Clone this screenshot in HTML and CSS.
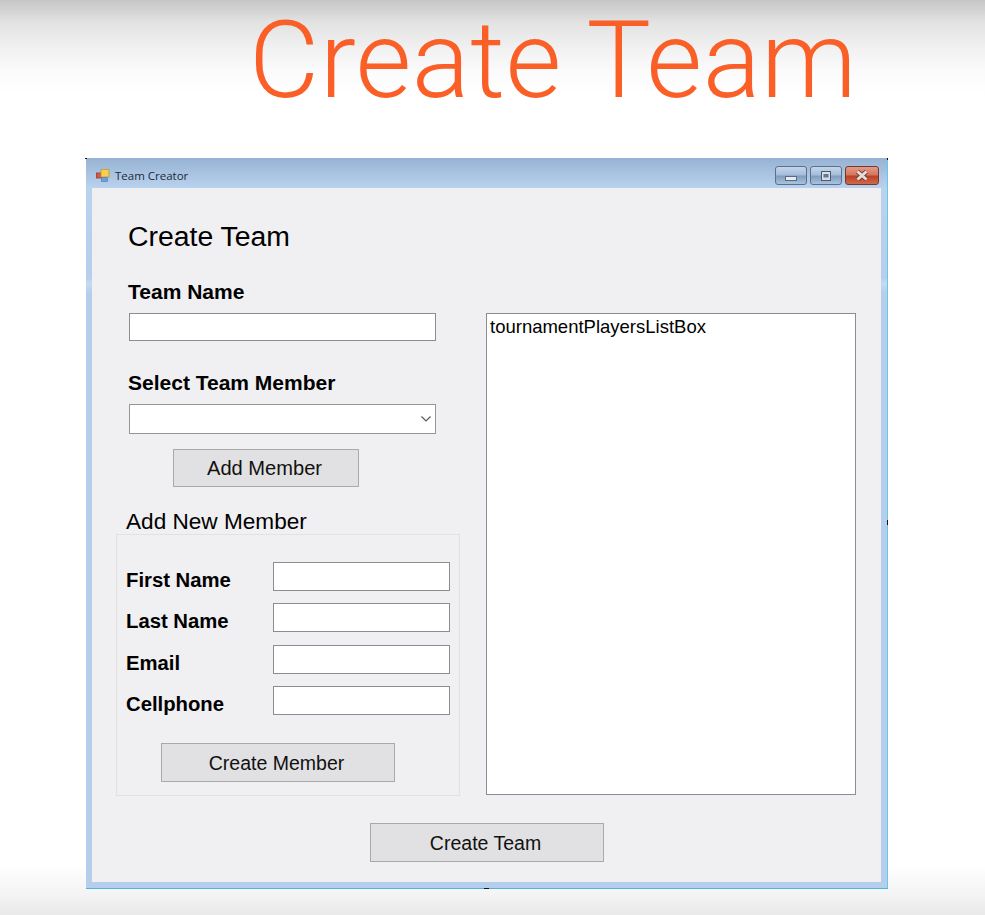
FILE: index.html
```html
<!DOCTYPE html>
<html lang="en">
<head>
    <meta charset="UTF-8">
    <title>Create Team</title>
    <link rel="stylesheet" href="styles.css">
</head>
<body>
    <h1 class="slide-title">Create Team</h1>
    <div class="window">
        <span class="mark mark-tl"></span>
        <span class="mark mark-tr"></span>
        <span class="mark mark-right"></span>
        <span class="mark mark-bottom"></span>
        <div class="titlebar">
            <svg class="app-icon" width="14" height="13" viewBox="0 0 14 13">
                <rect x="0.5" y="4" width="5" height="5" fill="#d9534a" stroke="#9b3a34" stroke-width="0.8"/>
                <rect x="5" y="0.5" width="8" height="7.5" fill="#f6cf4e" stroke="#c39a2a" stroke-width="0.8"/>
                <rect x="5.5" y="8.5" width="6" height="4" fill="#6d9fdc" stroke="#4a78b2" stroke-width="0.6"/>
            </svg>
            <span class="window-name">Team Creator</span>
            <div class="controls">
                <div class="ctl">
                    <svg class="min-glyph" width="12" height="5" viewBox="0 0 12 5"><rect x="0.5" y="0.5" width="11" height="4" fill="#e6ebf1" stroke="#5a6a80"/></svg>
                </div>
                <div class="ctl">
                    <svg width="12" height="10" viewBox="0 0 12 10"><rect x="1.5" y="0.5" width="9" height="9" fill="#d5dde8" stroke="#4a5a70"/><rect x="3.5" y="3" width="5" height="3.5" fill="#66788f"/></svg>
                </div>
                <div class="ctl ctl-close">
                    <svg width="14" height="11" viewBox="0 0 14 11"><path d="M2.5 1.5 L11.5 9.5 M11.5 1.5 L2.5 9.5" stroke="#7a3a30" stroke-width="4.6"/><path d="M2.5 1.5 L11.5 9.5 M11.5 1.5 L2.5 9.5" stroke="#e4dedb" stroke-width="3"/></svg>
                </div>
            </div>
        </div>
        <div class="client">
            <div class="columns">
                <div class="left">
                    <div class="form-head">
                        <h2 class="form-title">Create Team</h2>
                        <label class="field-label">Team Name</label>
                        <input class="text-box name-box" type="text">
                        <label class="field-label member-label">Select Team Member</label>
                        <div class="combo">
                            <svg width="10" height="6" viewBox="0 0 10 6"><path d="M0.5 0.5 L5 5 L9.5 0.5" fill="none" stroke="#5a5a5a" stroke-width="1.2"/></svg>
                        </div>
                        <button class="btn add-btn">Add Member</button>
                    </div>
                    <div class="group-title">Add New Member</div>
                    <div class="group">
                        <div class="row"><span class="row-label">First Name</span><input class="text-box row-box" type="text"></div>
                        <div class="row"><span class="row-label">Last Name</span><input class="text-box row-box" type="text"></div>
                        <div class="row"><span class="row-label">Email</span><input class="text-box row-box" type="text"></div>
                        <div class="row"><span class="row-label">Cellphone</span><input class="text-box row-box" type="text"></div>
                        <button class="btn create-member">Create Member</button>
                    </div>
                </div>
                <div class="list-box">tournamentPlayersListBox</div>
            </div>
            <button class="btn create-team">Create Team</button>
        </div>
    </div>
</body>
</html>
```

FILE: styles.css
```css
*{
    box-sizing: border-box;
}
body{
    margin: 0;
    height: 915px;
    overflow: hidden;
    font-family: 'Liberation Sans', Arial, sans-serif;
    color: #000;
    background: linear-gradient(#c6c6c6 0, #e2e2e2 22px, #f2f2f2 50px, #fbfbfb 72px, #fff 95px, #fff 865px, #f4f4f4 893px, #e9e9e9 915px);
}
.slide-title{
    margin: 0;
    height: 158px;
    padding-left: 249px;
    font-family: Roboto, sans-serif;
    font-weight: 300;
    font-size: 108px;
    line-height: 120px;
    letter-spacing: 0.5px;
    color: #fb5f28;
}
.window{
    position: relative;
    width: 802px;
    height: 731px;
    margin-left: 86px;
    display: flex;
    flex-direction: column;
    border-right: 1px solid #5fcbe6;
    border-bottom: 1px solid #4fb3dc;
    background: linear-gradient(#97b2d3 0, #b9d2ee 30px, #b5cfec 120px, #c6dbf1 125px, #b4ceeb 135px, #b4ceeb 100%);
}
.mark{
    position: absolute;
    background: #111;
}
.mark-tl{
    left: -1px;
    top: 0;
    width: 2px;
    height: 1px;
}
.mark-tr{
    right: -1px;
    top: 0;
    width: 1px;
    height: 2px;
}
.mark-right{
    right: -1px;
    top: 362px;
    width: 1px;
    height: 5px;
}
.mark-bottom{
    left: 398px;
    bottom: -1px;
    width: 5px;
    height: 1px;
}
.titlebar{
    height: 30px;
    flex-shrink: 0;
    display: flex;
    align-items: center;
    padding: 5px 8px 0 10px;
}
.app-icon{
    margin-right: 5px;
}
.window-name{
    font-family: 'Open Sans', sans-serif;
    font-size: 11.5px;
    color: #1c2a3a;
}
.controls{
    margin-left: auto;
    display: flex;
    gap: 3px;
}
.ctl{
    width: 32px;
    height: 19px;
    display: flex;
    align-items: center;
    justify-content: center;
    border: 1px solid #5d7088;
    border-radius: 3px;
    background: linear-gradient(#c3d5ea 0, #a5bdd9 48%, #7f9bbd 52%, #a9c3df 100%);
}
.min-glyph{
    margin-top: 6px;
}
.ctl-close{
    width: 34px;
    border-color: #6e3a32;
    background: linear-gradient(#e39a85 0, #d3765e 48%, #bb3f22 52%, #cf6a4a 100%);
}
.client{
    flex: 1;
    margin: 0 6px 6px 6px;
    width: 789px;
    background: #f0eff1;
}
.columns{
    display: flex;
    align-items: flex-start;
    padding-left: 24px;
}
.left{
    width: 344px;
}
.form-head{
    padding-left: 12px;
    height: 320px;
}
.form-title{
    margin: 0;
    padding-top: 33px;
    font-weight: normal;
    font-size: 28.4px;
    line-height: 30px;
}
.field-label{
    display: block;
    font-weight: bold;
    font-size: 21px;
    line-height: 24px;
}
.form-title + .field-label{
    margin-top: 29px;
}
.member-label{
    margin-top: 30px;
}
.text-box{
    display: block;
    background: #fff;
    border: 1px solid #8c8c94;
    border-radius: 0;
    padding: 0;
    outline: none;
}
.name-box{
    width: 307px;
    height: 28px;
    margin-top: 9px;
    margin-left: 1px;
}
.combo{
    width: 307px;
    height: 30px;
    margin-top: 9px;
    margin-left: 1px;
    display: flex;
    align-items: center;
    justify-content: flex-end;
    padding-right: 4px;
    background: #fff;
    border: 1px solid #969696;
}
.btn{
    display: block;
    padding: 2px 3px 0 0;
    font-family: 'Liberation Sans', Arial, sans-serif;
    font-size: 19.5px;
    color: #111;
    background: #e1e0e2;
    border: 1px solid #a9a9a9;
    border-radius: 0;
}
.add-btn{
    width: 186px;
    height: 38px;
    margin-top: 15px;
    margin-left: 45px;
    padding-top: 0;
    font-size: 20.1px;
}
.group-title{
    height: 26px;
    padding-left: 10px;
    font-size: 22.6px;
    line-height: 28px;
}
.group{
    height: 262px;
    padding: 27px 9px 0 9px;
    border: 1px solid #e2e2e3;
}
.row{
    display: flex;
    align-items: center;
    height: 29px;
    margin-bottom: 12.4px;
}
.row-label{
    width: 147px;
    padding-top: 8px;
    font-weight: bold;
    font-size: 20.3px;
}
.row-box{
    width: 177px;
    height: 29px;
}
.create-member{
    width: 234px;
    height: 39px;
    margin-top: 28px;
    margin-left: 35px;
}
.list-box{
    width: 370px;
    height: 482px;
    margin-left: 26px;
    margin-top: 125px;
    padding: 3px 3px;
    font-size: 18.5px;
    line-height: 20px;
    background: #fff;
    border: 1px solid #8c8c94;
}
.create-team{
    width: 234px;
    height: 39px;
    margin-top: 27px;
    margin-left: 278px;
}
```
